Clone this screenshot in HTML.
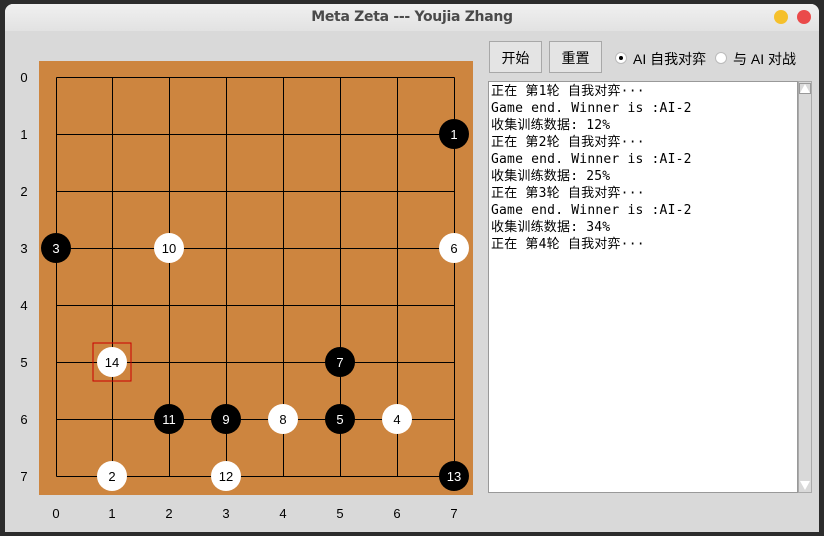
<!DOCTYPE html><html><head><style>
body{margin:0;width:824px;height:536px;background:#2c2c2c;overflow:hidden;font-family:"Liberation Sans","Noto Sans CJK SC",sans-serif}
.win{position:absolute;left:5px;top:4px;width:814px;height:528px;background:#d9d9d9;border-radius:8px 8px 0 0;overflow:hidden}
.tb{height:27px;background:linear-gradient(#f0f0f0,#e2e2e2);text-align:center;font:bold 14px "DejaVu Sans",sans-serif;color:#4a4a4a;line-height:27px;letter-spacing:-0.3px}
.dot{position:absolute;top:6px;width:14px;height:14px;border-radius:50%}
.btn{position:absolute;top:37px;height:32px;border:1px solid #a8a8a8;background:#e4e4e4;font-size:14px;line-height:32px;text-align:center;box-sizing:border-box}
.txt{position:absolute;left:483px;top:77px;width:310px;height:412px;background:#fff;border:1px solid #999;box-sizing:border-box;font:13px "DejaVu Sans Mono","Noto Sans CJK SC",monospace;line-height:17px;padding:1px 2px;letter-spacing:0.2px;white-space:pre}
.sb{position:absolute;left:793px;top:77px;width:14px;height:412px;background:#d9d9d9;border:1px solid #aaa;box-sizing:border-box}
</style></head><body><div class="win">
<div class="tb">Meta Zeta --- Youjia Zhang</div>
<div class="dot" style="left:769px;background:#f5c02c"></div><div class="dot" style="left:792px;background:#ea4a4a"></div>
<div class="btn" style="left:484px;width:53px">开始</div>
<div class="btn" style="left:544px;width:53px">重置</div>
<div style="position:absolute;left:610px;top:48px;width:10px;height:10px;border-radius:50%;background:#fff;border:1px solid #bbb"><div style="margin:3px;width:4px;height:4px;border-radius:50%;background:#000"></div></div>
<div style="position:absolute;left:628px;top:45px;font-size:14px">AI 自我对弈</div>
<div style="position:absolute;left:710px;top:48px;width:10px;height:10px;border-radius:50%;background:#fff;border:1px solid #bbb"></div>
<div style="position:absolute;left:728px;top:45px;font-size:14px">与 AI 对战</div>
<div class="txt">正在 第1轮 自我对弈···
Game end. Winner is :AI-2
收集训练数据: 12%
正在 第2轮 自我对弈···
Game end. Winner is :AI-2
收集训练数据: 25%
正在 第3轮 自我对弈···
Game end. Winner is :AI-2
收集训练数据: 34%
正在 第4轮 自我对弈···</div>
<div class="sb"><div style="margin:2px 1px;border-left:5px solid transparent;border-right:5px solid transparent;border-bottom:9px solid #fff;outline:1px solid #999"></div><div style="position:absolute;bottom:2px;left:1px;border-left:5px solid transparent;border-right:5px solid transparent;border-top:9px solid #fff"></div></div>
<svg style="position:absolute;left:-5px;top:-4px" width="480" height="536" font-family="Liberation Sans, sans-serif">
<rect x="39" y="61" width="434" height="434" fill="#cd853f"/>
<g stroke="#000" stroke-width="1">
<path d="M56.5 77.5H454.5M56.5 134.5H454.5M56.5 191.5H454.5M56.5 248.5H454.5M56.5 305.5H454.5M56.5 362.5H454.5M56.5 419.5H454.5M56.5 476.5H454.5M56.5 77.5V476.5M112.5 77.5V476.5M169.5 77.5V476.5M226.5 77.5V476.5M283.5 77.5V476.5M340.5 77.5V476.5M397.5 77.5V476.5M454.5 77.5V476.5"/></g>
<g font-size="13" fill="#000" text-anchor="middle">
<text x="24" y="82">0</text><text x="24" y="139">1</text><text x="24" y="196">2</text><text x="24" y="253">3</text><text x="24" y="310">4</text><text x="24" y="367">5</text><text x="24" y="424">6</text><text x="24" y="481">7</text>
<text x="56" y="518">0</text><text x="112" y="518">1</text><text x="169" y="518">2</text><text x="226" y="518">3</text><text x="283" y="518">4</text><text x="340" y="518">5</text><text x="397" y="518">6</text><text x="454" y="518">7</text>
</g>
<rect x="93" y="343" width="38" height="38" fill="none" stroke="#c00"/>
<g font-size="13" text-anchor="middle">
<circle cx="454" cy="134" r="15"/><text x="454" y="139" fill="#fff">1</text>
<circle cx="56" cy="248" r="15"/><text x="56" y="253" fill="#fff">3</text>
<circle cx="169" cy="248" r="15" fill="#fff"/><text x="169" y="253">10</text>
<circle cx="454" cy="248" r="15" fill="#fff"/><text x="454" y="253">6</text>
<circle cx="112" cy="362" r="15" fill="#fff"/><text x="112" y="367">14</text>
<circle cx="340" cy="362" r="15"/><text x="340" y="367" fill="#fff">7</text>
<circle cx="169" cy="419" r="15"/><text x="169" y="424" fill="#fff">11</text>
<circle cx="226" cy="419" r="15"/><text x="226" y="424" fill="#fff">9</text>
<circle cx="283" cy="419" r="15" fill="#fff"/><text x="283" y="424">8</text>
<circle cx="340" cy="419" r="15"/><text x="340" y="424" fill="#fff">5</text>
<circle cx="397" cy="419" r="15" fill="#fff"/><text x="397" y="424">4</text>
<circle cx="112" cy="476" r="15" fill="#fff"/><text x="112" y="481">2</text>
<circle cx="226" cy="476" r="15" fill="#fff"/><text x="226" y="481">12</text>
<circle cx="454" cy="476" r="15"/><text x="454" y="481" fill="#fff">13</text>
</g></svg>
</div></body></html>
